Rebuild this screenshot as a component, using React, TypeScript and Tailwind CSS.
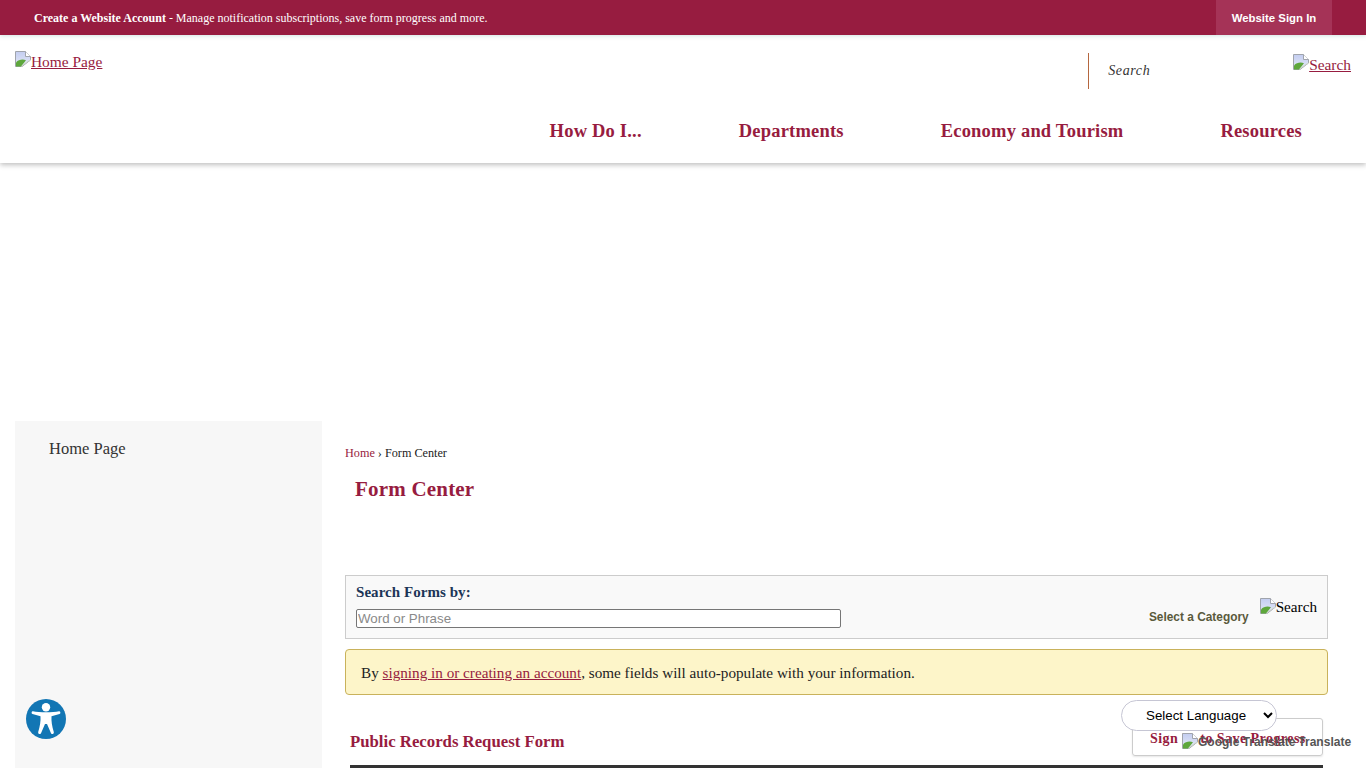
const serif = "font-['Liberation_Serif','Times_New_Roman',serif]";
const sans = "font-['Liberation_Sans',Arial,sans-serif]";

const BrokenImage = () => (
  <svg width="16" height="16" viewBox="0 0 16 16" className="inline-block align-baseline shrink-0">
    <defs>
      <linearGradient id="sky" x1="0" y1="0" x2="0" y2="1">
        <stop offset="0" stopColor="#c3cdf0" />
        <stop offset="1" stopColor="#e6eaf8" />
      </linearGradient>
    </defs>
    <path d="M0.5 0.5H10.5L15.5 5.5V9L7 15.5H0.5Z" fill="url(#sky)" stroke="#a0a4ac" />
    <path d="M10.5 0.5V5.5H15.5" fill="#fff" stroke="#a0a4ac" />
    <path d="M1 15.5V11.5C3.5 8.6 7.5 8 11 9.2L6 15.5Z" fill="#5ea73c" />
    <path d="M6.5 15.5C8.5 13.5 11 11.5 15.5 9" fill="none" stroke="#cfd6c8" />
  </svg>
);

const AccessIcon = () => (
  <svg width="40" height="40" viewBox="0 0 40 40">
    <circle cx="20" cy="20" r="20" fill="#1276b4" />
    <circle cx="20" cy="8.3" r="4.2" fill="#fff" />
    <path
      d="M7 12.2C13 13.6 27 13.6 33 12.2C34.5 12 35 14.5 33.5 15L25.5 17.2C25.2 22 26 27 27.8 33C28.2 35 26 35.8 25 34.2L21 25H19L15 34.2C14 35.8 11.8 35 12.2 33C14 27 14.8 22 14.5 17.2L6.5 15C5 14.5 5.5 12 7 12.2Z"
      fill="#fff"
    />
  </svg>
);

const navItems = ["How Do I...", "Departments", "Economy and Tourism", "Resources"];

export default function App() {
  return (
    <div className={`relative h-[768px] overflow-hidden bg-white ${serif}`}>
      {/* top bar */}
      <div className="relative z-10 flex h-[35px] items-center justify-between bg-[#971c40] pl-[34px] pr-[34px] shadow-[0_1px_4px_rgba(120,180,170,0.35)]">
        <p className="text-[12px] text-white">
          <b>Create a Website Account</b> - Manage notification subscriptions, save form progress and more.
        </p>
        <a className={`flex h-full w-[116px] items-center justify-center bg-[#a53357] pt-[2px] text-[11.4px] font-bold text-white ${sans}`}>
          Website Sign In
        </a>
      </div>

      {/* header */}
      <header className="relative flex h-[128px] flex-col shadow-[0_2px_5px_rgba(0,0,0,0.25)]">
        <div className="flex h-[76px] items-start justify-between pl-[15px] pr-[15px] pt-[16px]">
          <a className="flex items-start text-[15.4px] leading-[18px] text-[#971c40] underline">
            <BrokenImage />
            <span className="mt-[2px]">Home Page</span>
          </a>
          <div className="flex items-start">
            <div className="mt-[2px] flex h-[36px] w-[205px] items-center border-l border-[#b5673f] pb-[2px] pl-[19px] text-[14px] italic tracking-[0.65px] text-[#333]">
              Search
            </div>
            <a className="mt-[3px] flex items-start text-[15.4px] leading-[18px] text-[#971c40] underline">
              <BrokenImage />
              <span className="mt-[2px]">Search</span>
            </a>
          </div>
        </div>
        <nav className="flex h-[52px] justify-end gap-[97px] pr-[64px] pt-[7px] text-[18.5px] font-bold leading-[26px] text-[#971c40]">
          {navItems.map((item) => (
            <a key={item} className="tracking-[0.2px]">{item}</a>
          ))}
        </nav>
      </header>

      {/* body */}
      <div className="mt-[258px] flex items-start pl-[15px] pr-[38px]">
        <aside className="h-[347px] w-[307px] shrink-0 bg-[#f7f7f7] pl-[34px] pt-[18px] text-[16.5px] leading-[20px] text-[#333]">
          Home Page
        </aside>
        <main className="ml-[23px] w-[983px]">
          <div className="mt-[25px] text-[12.2px] leading-[14px] text-[#222]">
            <a className="text-[#971c40]">Home</a> › Form Center
          </div>
          <h1 className="ml-[10px] mt-[17px] text-[21px] font-bold leading-[24px] tracking-[0.2px] text-[#971c40]">Form Center</h1>

          <section className="mt-[74px] flex h-[64px] border border-[#ccc] bg-[#f9f9f9] pl-[10px] pr-[10px]">
            <div className="flex-1">
              <label className="mt-[7px] block text-[15px] font-bold leading-[18px] tracking-[0.05px] text-[#1c3557]">Search Forms by:</label>
              <input
                placeholder="Word or Phrase"
                readOnly
                className={`mt-[8px] block h-[19px] w-[485px] rounded-[2px] border border-[#767676] bg-white px-[1px] text-[13.33px] placeholder:text-[#8a8a8a] ${sans}`}
              />
            </div>
            <a className={`mt-[34px] text-[11.9px] font-bold leading-[14px] text-[#5a5a3c] ${sans}`}>Select a Category</a>
            <span className="ml-[11px] mt-[22px] flex items-start text-[15.2px] leading-[18px] text-black">
              <BrokenImage />
              Search
            </span>
          </section>

          <div className="mt-[10px] flex h-[46px] items-center rounded-[4px] border border-[#c9b25b] bg-[#fdf5c9] pl-[15px] pt-[2px] text-[15.2px] text-[#222]">
            <p>
              By <a className="text-[#971c40] underline">signing in or creating an account</a>, some fields will auto-populate with your information.
            </p>
          </div>

          <div className="ml-[5px] mr-[5px] mt-[23px] flex h-[50px] items-start justify-between border-b-[3px] border-[#333]">
            <h2 className="mt-[14px] text-[16.75px] font-bold leading-[20px] text-[#971c40]">Public Records Request Form</h2>
            <a className="flex h-[38px] w-[191px] items-center whitespace-nowrap rounded-[3px] border border-[#ccc] pl-[17px] pt-[3px] text-[14px] font-bold tracking-[0.45px] text-[#971c40] shadow-[0_1px_2px_rgba(0,0,0,0.1)]">
              Sign In to Save Progress
            </a>
          </div>
        </main>
      </div>

      {/* floating widgets */}
      <button className="absolute left-[26px] top-[699px]">
        <AccessIcon />
      </button>
      <select className={`absolute left-[1121px] top-[700px] h-[31px] w-[156px] rounded-[16px] border border-[#c6c6d4] bg-white pl-[20px] text-[13.33px] text-black ${sans}`}>
        <option>Select Language</option>
      </select>
      <div className={`absolute left-[1182px] top-[733px] flex items-start text-[12px] font-bold leading-[16px] text-[#555] ${sans}`}>
        <BrokenImage />
        <span className="mt-[1px] whitespace-nowrap">Google Translate</span>
        <span className="ml-[3px] mt-[1px]">Translate</span>
      </div>
    </div>
  );
}
